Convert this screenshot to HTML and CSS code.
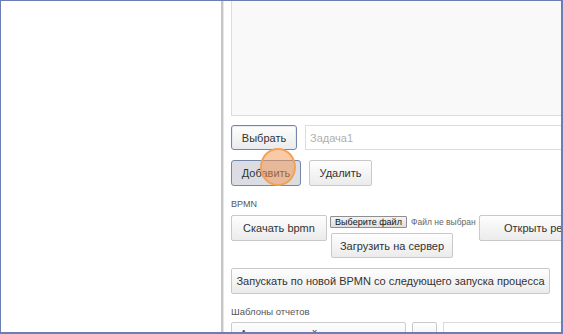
FILE: index.html
```html
<!DOCTYPE html>
<html lang="ru">
<head>
<meta charset="utf-8">
<link rel="stylesheet" href="styles.css">
</head>
<body>
<div class="frame">
  <div class="left-pane"></div>
  <div class="separator"></div>
  <div class="right-pane">
    <div class="text-area"></div>
    <div class="row row-1">
      <button class="btn btn-focus btn-select">Выбрать</button>
      <div class="field field-task"><span class="placeholder">Задача1</span></div>
    </div>
    <div class="row row-2">
      <button class="btn btn-pressed btn-add">Добавить</button>
      <button class="btn btn-delete">Удалить</button>
    </div>
    <div class="label label-bpmn">BPMN</div>
    <div class="row row-3">
      <button class="btn btn-download">Скачать bpmn</button>
      <div class="file-col">
        <div class="file-line">
          <span class="file-btn">Выберите файл</span>
          <span class="file-none">Файл не выбран</span>
        </div>
        <button class="btn btn-upload">Загрузить на сервер</button>
      </div>
      <button class="btn btn-open">Открыть редактор</button>
    </div>
    <div class="row row-4">
      <button class="btn btn-run">Запускать по новой BPMN со следующего запуска процесса</button>
    </div>
    <div class="label label-templates">Шаблоны отчетов</div>
    <div class="row row-5">
      <div class="select"><span class="select-text">Аналитический реестр</span><span class="select-arrow">▲</span></div>
      <button class="btn btn-icon"><span class="icon-glyph">▴</span></button>
      <div class="field field-report"></div>
    </div>
  </div>
  <div class="cursor-mark"></div>
</div>
</body>
</html>
```

FILE: styles.css
```css
html, body {
  margin: 0;
  padding: 0;
  background: #ffffff;
}

.frame {
  position: relative;
  width: 563px;
  height: 334px;
  box-sizing: border-box;
  border-style: solid;
  border-color: #6a7db5;
  border-width: 1px 2px 2px 1px;
  overflow: hidden;
  display: flex;
  font-family: "Liberation Sans", Arial, sans-serif;
  color: #333333;
  background: #ffffff;
}

.left-pane {
  width: 220px;
  flex: none;
  background: #ffffff;
}

.separator {
  width: 2px;
  flex: none;
  background: #c6c6ca;
  border-right: 1px solid #e6e6e8;
}

.right-pane {
  flex: 1;
  min-width: 0;
  overflow: hidden;
  padding-left: 7px;
}

.text-area {
  width: 420px;
  height: 115px;
  box-sizing: border-box;
  background: #f9f9f9;
  border: 1px solid #dcdcdc;
  border-top: none;
}

.row {
  display: flex;
  align-items: flex-start;
  white-space: nowrap;
}

.row-1 { margin-top: 9px; gap: 8px; }
.row-2 { margin-top: 10px; gap: 8px; }
.row-3 { margin-top: 5px; gap: 3px; }
.row-4 { margin-top: 10px; }
.row-5 { margin-top: 4px; gap: 6px; }

.btn {
  flex: none;
  box-sizing: border-box;
  height: 26px;
  margin: 0;
  padding: 0;
  font-family: "Liberation Sans", Arial, sans-serif;
  font-size: 11px;
  color: #333333;
  background: linear-gradient(#fefefe, #ebebeb);
  border: 1px solid #c9c9c9;
  border-radius: 2px;
  white-space: nowrap;
  overflow: hidden;
}

.btn-focus {
  border-color: #7686a8;
  border-radius: 3px;
  box-shadow: inset 0 0 0 1px #e6eaf2;
}

.btn-pressed {
  background: #dcdde2;
  border-color: #7686a8;
  border-radius: 3px;
}

.btn-select { width: 66px; height: 25px; }
.btn-add { width: 70px; }
.btn-delete { width: 63px; }
.btn-download { width: 96px; }
.btn-upload { width: 122px; height: 25px; margin-top: 5px; margin-left: 1px; }
.btn-open { padding: 0 24px; }
.btn-run { width: 319px; }

.field {
  box-sizing: border-box;
  height: 25px;
  width: 300px;
  flex: none;
  background: #ffffff;
  border: 1px solid #dcdcdc;
  display: flex;
  align-items: center;
  padding-left: 4px;
}

.placeholder {
  font-size: 11px;
  color: #b0b0b0;
}

.label {
  color: #555555;
}

.label-bpmn {
  margin-top: 13px;
  font-size: 9px;
  line-height: 11px;
}

.label-templates {
  margin-top: 12px;
  font-size: 9.5px;
  line-height: 12px;
}

.file-col {
  display: flex;
  flex-direction: column;
  align-items: flex-start;
  width: 146px;
  flex: none;
}

.file-line {
  display: flex;
  align-items: center;
  gap: 4px;
  margin-top: 1px;
  height: 12px;
}

.file-btn {
  box-sizing: border-box;
  width: 77px;
  height: 12px;
  line-height: 10px;
  text-align: center;
  font-size: 9px;
  color: #111111;
  background: linear-gradient(#f4f4f4, #dedede);
  border: 1px solid #8f8f8f;
  border-radius: 1px;
}

.file-none {
  font-size: 8.5px;
  color: #666666;
}

.select {
  box-sizing: border-box;
  width: 175px;
  height: 24px;
  flex: none;
  display: flex;
  justify-content: space-between;
  align-items: center;
  padding: 0 6px 0 8px;
  background: linear-gradient(#fdfdfd, #efefef);
  border: 1px solid #cccccc;
  border-radius: 2px;
  font-size: 11px;
  color: #444444;
}

.select-arrow {
  font-size: 6px;
  color: #999999;
}

.btn-icon {
  width: 25px;
  height: 24px;
}

.icon-glyph {
  font-size: 10px;
  color: #222222;
}

.field-report {
  height: 24px;
}

.cursor-mark {
  position: absolute;
  left: 259px;
  top: 147px;
  width: 36px;
  height: 38px;
  box-sizing: border-box;
  border-radius: 50%;
  border: 2px solid #f2a258;
  background: rgba(243, 150, 80, 0.5);
}
```
